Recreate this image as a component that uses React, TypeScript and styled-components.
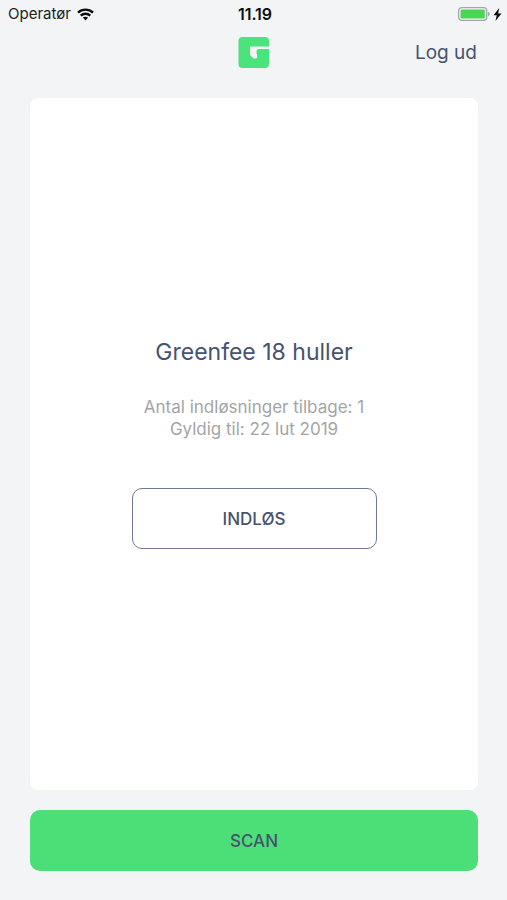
import React from "react";
import styled, { createGlobalStyle } from "styled-components";

const colors = {
  page: "#f2f4f6",
  navy: "#46536e",
  green: "#4cdf78",
  muted: "#a3a5a6",
};

const GlobalStyle = createGlobalStyle`
  * { box-sizing: border-box; }
  body {
    margin: 0;
    background: ${colors.page};
    font-family: Inter, "Liberation Sans", sans-serif;
  }
`;

const Screen = styled.div`
  display: flex;
  flex-direction: column;
  min-height: 100vh;
`;

const StatusBar = styled.div`
  display: grid;
  grid-template-columns: 1fr auto 1fr;
  align-items: center;
  height: 28px;
  padding: 0 5px 0 8px;
  font-size: 15px;
  line-height: 20px;
  color: #1c1e20;
`;

const Carrier = styled.div`
  display: flex;
  align-items: center;
  gap: 6px;
`;

const Clock = styled.time`
  font-size: 16px;
  font-weight: 600;
  color: #0c0d0e;
`;

const Power = styled.div`
  display: flex;
  align-items: center;
  justify-content: flex-end;
  gap: 3px;
`;

const Header = styled.header`
  display: grid;
  grid-template-columns: 1fr auto 1fr;
  align-items: center;
  height: 49px;
  padding: 0 30px;
`;

const Logo = styled.svg`
  display: block;
  grid-column: 2;
`;

const LogoutButton = styled.button`
  justify-self: end;
  padding: 0;
  border: 0;
  background: none;
  font: inherit;
  font-size: 19px;
  line-height: 24px;
  color: ${colors.navy};
  cursor: pointer;
`;

const Main = styled.main`
  display: flex;
  flex: 1;
  flex-direction: column;
  gap: 20px;
  padding: 21px 29px 29px 30px;
`;

const Card = styled.section`
  display: flex;
  flex: 1;
  flex-direction: column;
  align-items: center;
  justify-content: center;
  padding: 20px 20px 22px;
  border-radius: 8px;
  background: #fff;
  text-align: center;
`;

const Title = styled.h1`
  margin: 0 0 29px;
  font-size: 23px;
  line-height: 30px;
  font-weight: 400;
  color: ${colors.navy};
`;

const Details = styled.p`
  margin: 0 0 48px;
  font-size: 17px;
  line-height: 22px;
  color: ${colors.muted};
`;

const ActionButton = styled.button<{ $variant: "outline" | "filled" }>`
  width: 100%;
  max-width: ${(p) => (p.$variant === "outline" ? "245px" : "none")};
  height: 61px;
  border: ${(p) => (p.$variant === "outline" ? "1px solid #6f7a92" : "0")};
  border-radius: 10px;
  background: ${(p) => (p.$variant === "outline" ? "#fff" : colors.green)};
  font: inherit;
  font-size: 17px;
  line-height: 22px;
  font-weight: 500;
  color: ${colors.navy};
  cursor: pointer;
`;

export default function App() {
  return (
    <Screen>
      <GlobalStyle />
      <StatusBar>
        <Carrier>
          <span>Operatør</span>
          <svg width="17" height="13" viewBox="0 0 17 13" fill="none" stroke="#0c0d0e" strokeWidth="2.3" aria-hidden="true">
            <path d="M1 4.7C5.2.7 11.8.7 16 4.7" />
            <path d="M3.7 7.6c2.7-2.5 6.9-2.5 9.6 0" />
            <path d="M5.9 9.6c1.500-1.300 3.700-1.300 5.200 0L8.500 12.400Z" fill="#0c0d0e" stroke="none" />
          </svg>
        </Carrier>
        <Clock>11.19</Clock>
        <Power>
          <svg width="32" height="14" viewBox="0 0 32 14" aria-hidden="true">
            <rect x="0.7" y="0.7" width="28" height="12.6" rx="3" fill="#f5f7f8" stroke="#a2a5a8" strokeWidth="1.3" />
            <rect x="2.6" y="2.6" width="24.2" height="8.8" rx="1.2" fill="#48d653" />
            <path d="M30 4.7c2.2.8 2.2 3.8 0 4.6Z" fill="#a2a5a8" />
          </svg>
          <svg width="9" height="13" viewBox="0 0 8 12" aria-hidden="true">
            <path d="M5.6 0 .3 6.7h3L2.1 12 7.7 5H4.6Z" fill="#0c0d0e" />
          </svg>
        </Power>
      </StatusBar>
      <Header>
        <Logo width="31" height="31" viewBox="0 0 31 31" role="img" aria-label="Logo">
          <path
            d="M4.500 0h22.500a4 4 0 0 1 4 4v5.600H12v7.400c0 1.200.6 1.900 1.500 2.600.8.600 1.200 1.600 2.300 1.900 1 .3 3.500 0 3.500-1.800 0-1.900-1-2.900-.8-4.700.1-1.500.4-2.900 2-2.900H31V27a4 4 0 0 1-4 4H4.500a4 4 0 0 1-4-4V4a4 4 0 0 1 4-4Z"
            fill="#4be37c"
          />
        </Logo>
        <LogoutButton type="button">Log ud</LogoutButton>
      </Header>
      <Main>
        <Card>
          <Title>Greenfee 18 huller</Title>
          <Details>
            Antal indløsninger tilbage: 1<br />
            Gyldig til: 22 lut 2019
          </Details>
          <ActionButton type="button" $variant="outline">INDLØS</ActionButton>
        </Card>
        <ActionButton type="button" $variant="filled">SCAN</ActionButton>
      </Main>
    </Screen>
  );
}
